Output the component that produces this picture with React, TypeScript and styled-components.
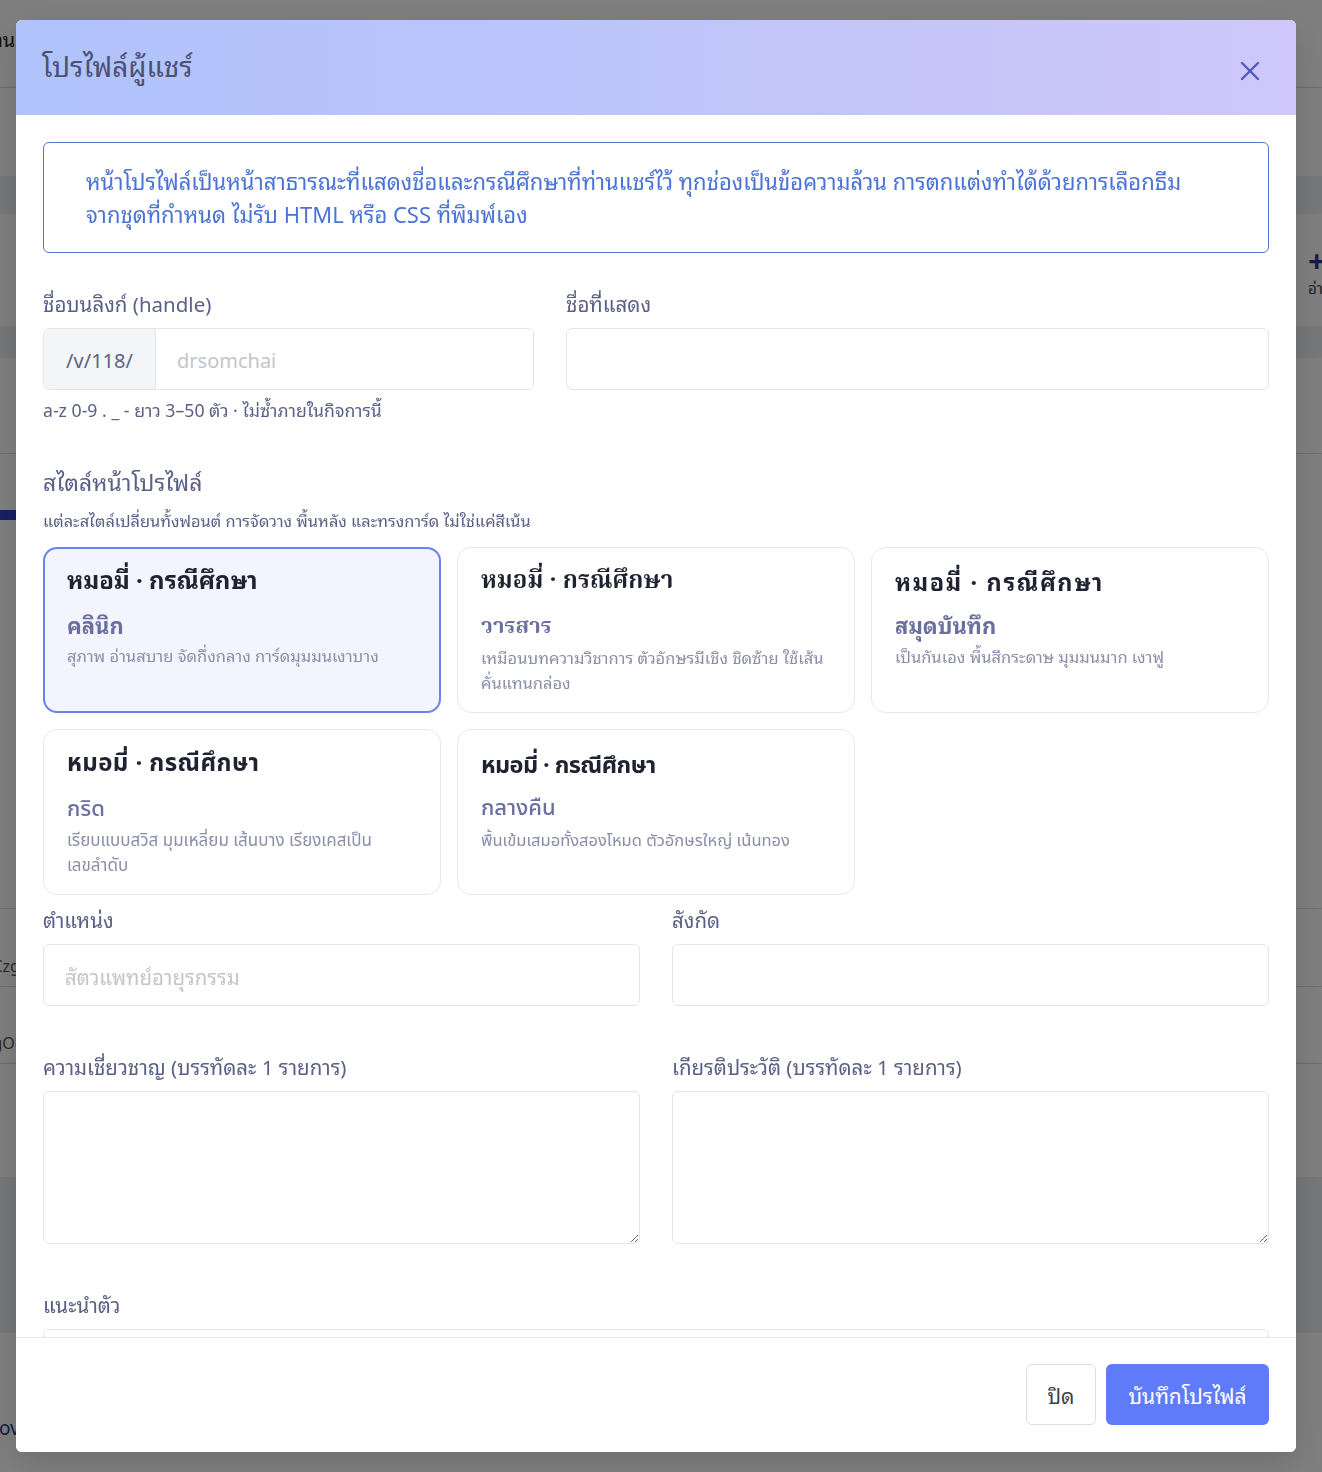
import { FunctionComponent } from 'react';
import styled, { createGlobalStyle } from 'styled-components';

const THAI = `"Noto Sans Thai Looped", "Noto Sans Thai", "Noto Sans", "DejaVu Sans", sans-serif`;

const GlobalStyle = createGlobalStyle`
  html, body {
    margin: 0;
    padding: 0;
    background: #ffffff;
    font-family: ${THAI};
  }
  * { box-sizing: border-box; }
`;

type StyleCard = {
  name: string;
  desc: string;
  variant: 'clinic' | 'journal' | 'notebook' | 'grid' | 'night';
};

const styleCards: StyleCard[] = [
  { name: 'คลินิก', desc: 'สุภาพ อ่านสบาย จัดกึ่งกลาง การ์ดมุมมนเงาบาง', variant: 'clinic' },
  { name: 'วารสาร', desc: 'เหมือนบทความวิชาการ ตัวอักษรมีเชิง ชิดซ้าย ใช้เส้นคั่นแทนกล่อง', variant: 'journal' },
  { name: 'สมุดบันทึก', desc: 'เป็นกันเอง พื้นสีกระดาษ มุมมนมาก เงาฟู', variant: 'notebook' },
  { name: 'กริด', desc: 'เรียบแบบสวิส มุมเหลี่ยม เส้นบาง เรียงเคสเป็นเลขลำดับ', variant: 'grid' },
  { name: 'กลางคืน', desc: 'พื้นเข้มเสมอทั้งสองโหมด ตัวอักษรใหญ่ เน้นทอง', variant: 'night' },
];

// offsets so each card's lines sit where the reference shows them
const cardSpacing: Record<StyleCard['variant'], { title: number; name: number; desc: number }> = {
  clinic: { title: 0, name: 16, desc: 3 },
  journal: { title: 4, name: 16, desc: 1 },
  notebook: { title: 3, name: 13, desc: 4 },
  grid: { title: 4, name: 16, desc: 4 },
  night: { title: 6, name: 13, desc: 4 },
};

const CloseIcon = () => (
  <svg width="20" height="20" viewBox="0 0 20 20" fill="none">
    <path d="M2 2 L18 18 M18 2 L2 18" stroke="#5457b8" strokeWidth="2.3" strokeLinecap="round" />
  </svg>
);

const PageBehind: FunctionComponent = () => (
  <Behind>
    <BehindTop>
      <BehindTitle>รายการงาน</BehindTitle>
    </BehindTop>
    <BehindGap h={88} />
    <BehindBand h={38} />
    <BehindRow h={112}>
      <BehindSide>
        <PlusMark>+</PlusMark>
        <SmallMark>อ่าน</SmallMark>
      </BehindSide>
    </BehindRow>
    <BehindBand h={32} />
    <BehindRow h={96} bordered />
    <BehindGap h={56} />
    <BehindProgress />
    <BehindRow h={389} bordered />
    <BehindRow h={78} bordered>
      <BehindCode>xCzg</BehindCode>
    </BehindRow>
    <BehindRow h={77} bordered>
      <BehindCode>xgOl</BehindCode>
    </BehindRow>
    <BehindGap h={113} />
    <BehindBand h={156} />
    <BehindRow h={139}>
      <BehindLink>Approve</BehindLink>
    </BehindRow>
  </Behind>
);

const App: FunctionComponent = () => (
  <>
    <GlobalStyle />
    <PageBehind />
    <Backdrop>
      <Modal>
        <Header>
          <Title>โปรไฟล์ผู้แชร์</Title>
          <CloseButton aria-label="close">
            <CloseIcon />
          </CloseButton>
        </Header>
        <Body>
          <Notice>
            หน้าโปรไฟล์เป็นหน้าสาธารณะที่แสดงชื่อและกรณีศึกษาที่ท่านแชร์ไว้ ทุกช่องเป็นข้อความล้วน การตกแต่งทำได้ด้วยการเลือกธีม
            <br />
            จากชุดที่กำหนด ไม่รับ HTML หรือ CSS ที่พิมพ์เอง
          </Notice>

          <FieldRow cols="491fr 703fr" top={35}>
            <Field>
              <Label>ชื่อบนลิงก์ (handle)</Label>
              <InputGroup>
                <Prefix>/v/118/</Prefix>
                <GroupInput placeholder="drsomchai" />
              </InputGroup>
              <Help>a-z 0-9 . _ - ยาว 3–50 ตัว · ไม่ซ้ำภายในกิจการนี้</Help>
            </Field>
            <Field>
              <Label>ชื่อที่แสดง</Label>
              <TextInput />
            </Field>
          </FieldRow>

          <SectionTitle>สไตล์หน้าโปรไฟล์</SectionTitle>
          <SectionHint>แต่ละสไตล์เปลี่ยนทั้งฟอนต์ การจัดวาง พื้นหลัง และทรงการ์ด ไม่ใช่แค่สีเน้น</SectionHint>

          <CardGrid>
            {styleCards.map((c, i) => (
              <Card key={c.variant} selected={i === 0}>
                <CardTitle variant={c.variant}>หมอมี่ · กรณีศึกษา</CardTitle>
                <CardName variant={c.variant}>{c.name}</CardName>
                <CardDesc variant={c.variant}>{c.desc}</CardDesc>
              </Card>
            ))}
          </CardGrid>

          <FieldRow cols="1fr 1fr" top={9}>
            <Field>
              <Label>ตำแหน่ง</Label>
              <TextInput placeholder="สัตวแพทย์อายุรกรรม" />
            </Field>
            <Field>
              <Label>สังกัด</Label>
              <TextInput />
            </Field>
          </FieldRow>

          <FieldRow cols="1fr 1fr" top={45}>
            <Field>
              <Label>ความเชี่ยวชาญ (บรรทัดละ 1 รายการ)</Label>
              <TextArea />
            </Field>
            <Field>
              <Label>เกียรติประวัติ (บรรทัดละ 1 รายการ)</Label>
              <TextArea />
            </Field>
          </FieldRow>

          <FieldRow cols="1fr" top={45}>
            <Field>
              <Label>แนะนำตัว</Label>
              <TextArea />
            </Field>
          </FieldRow>
        </Body>
        <Footer>
          <GhostButton>ปิด</GhostButton>
          <PrimaryButton>บันทึกโปรไฟล์</PrimaryButton>
        </Footer>
      </Modal>
    </Backdrop>
  </>
);

export default App;

/* ---------- page behind the dialog ---------- */

const Behind = styled.div`
  width: 1322px;
  height: 1472px;
  overflow: hidden;
  display: flex;
  flex-direction: column;
  font-family: ${THAI};
`;

const BehindTop = styled.div`
  height: 88px;
  flex: none;
  border-bottom: 1px solid #d7d9e0;
  display: flex;
  align-items: center;
`;

const BehindTitle = styled.div`
  margin-left: -76px;
  margin-top: -12px;
  font-size: 20px;
  color: #222;
  white-space: nowrap;
`;

const BehindGap = styled.div<{ h: number }>`
  height: ${(p) => p.h}px;
  flex: none;
`;

const BehindBand = styled.div<{ h: number }>`
  height: ${(p) => p.h}px;
  background: #eceef2;
  flex: none;
`;

const BehindRow = styled.div<{ h: number; bordered?: boolean }>`
  height: ${(p) => p.h}px;
  flex: none;
  border-bottom: ${(p) => (p.bordered ? '1px solid #d7d9e0' : 'none')};
  display: flex;
  align-items: flex-end;
  padding-bottom: 8px;
`;

const BehindSide = styled.div`
  margin-left: auto;
  margin-right: -20px;
  margin-bottom: 20px;
  display: flex;
  flex-direction: column;
  align-items: flex-start;
  gap: 4px;
  width: 34px;
`;

const PlusMark = styled.div`
  font-size: 30px;
  font-weight: 700;
  color: #2b3a8c;
  line-height: 26px;
`;

const SmallMark = styled.div`
  font-size: 15px;
  line-height: 22px;
  color: #444;
  white-space: nowrap;
`;

const BehindProgress = styled.div`
  height: 10px;
  width: 400px;
  background: #2f44c8;
  flex: none;
`;

const BehindCode = styled.div`
  margin-left: -16px;
  font-size: 16px;
  color: #555;
`;

const BehindLink = styled.div`
  margin-left: -44px;
  margin-bottom: 22px;
  font-size: 19px;
  color: #2b3a8c;
`;

/* ---------- dialog ---------- */

const Backdrop = styled.div`
  position: fixed;
  inset: 0;
  background: rgba(0, 0, 0, 0.5);
  padding: 20px 26px 20px 16px;
  display: flex;
  align-items: flex-start;
`;

const Modal = styled.div`
  width: 1280px;
  height: 1432px;
  background: #ffffff;
  border-radius: 6px;
  overflow: hidden;
  display: flex;
  flex-direction: column;
  box-shadow: 0 10px 30px rgba(0, 0, 0, 0.15);
`;

const Header = styled.div`
  height: 95px;
  flex: none;
  display: flex;
  align-items: center;
  justify-content: space-between;
  padding: 0 36px 0 26px;
  background: linear-gradient(90deg, #b0c3fb 0%, #bcc4fa 45%, #cfc7f9 100%);
`;

const Title = styled.h1`
  margin: -6px 0 0;
  font-size: 28px;
  font-weight: 400;
  color: #4b5075;
`;

const CloseButton = styled.button`
  border: none;
  background: none;
  padding: 0;
  margin-top: 6px;
  display: flex;
  cursor: pointer;
`;

const Body = styled.div`
  flex: 1;
  overflow: hidden;
  padding: 27px 27px 0;
`;

const Notice = styled.div`
  border: 1px solid #5677c9;
  border-radius: 6px;
  padding: 21px 42px;
  color: #4a73d4;
  font-size: 22px;
  line-height: 33px;
  height: 111px;
  white-space: nowrap;
`;

const FieldRow = styled.div<{ cols: string; top: number }>`
  display: grid;
  grid-template-columns: ${(p) => p.cols};
  column-gap: 32px;
  margin-top: ${(p) => p.top}px;
`;

const Field = styled.div`
  display: flex;
  flex-direction: column;
  min-width: 0;
`;

const Label = styled.label`
  font-size: 20.5px;
  line-height: 30px;
  color: #5b6186;
  margin-bottom: 10px;
`;

const InputGroup = styled.div`
  display: flex;
  height: 62px;
  border: 1px solid #e3e5eb;
  border-radius: 6px;
  overflow: hidden;
`;

const Prefix = styled.div`
  width: 112px;
  flex: none;
  background: #f4f5f7;
  border-right: 1px solid #e3e5eb;
  display: flex;
  align-items: center;
  justify-content: center;
  font-size: 20px;
  color: #5b6186;
`;

const GroupInput = styled.input`
  flex: 1;
  min-width: 0;
  border: none;
  outline: none;
  padding: 0 21px;
  font-family: ${THAI};
  font-size: 20px;
  color: #333;
  &::placeholder { color: #c3c5cc; }
`;

const TextInput = styled.input`
  height: 62px;
  border: 1px solid #e3e5eb;
  border-radius: 6px;
  padding: 0 21px;
  font-family: ${THAI};
  font-size: 20.5px;
  color: #333;
  outline: none;
  &::placeholder { color: #c3c5cc; }
`;

const TextArea = styled.textarea`
  height: 153px;
  border: 1px solid #e3e5eb;
  border-radius: 6px;
  padding: 12px 21px;
  font-family: ${THAI};
  font-size: 20px;
  outline: none;
  resize: vertical;
`;

const Help = styled.div`
  margin-top: 7px;
  font-size: 17.7px;
  line-height: 24px;
  color: #5b6186;
`;

const SectionTitle = styled.div`
  margin-top: 44px;
  font-size: 23px;
  line-height: 32px;
  color: #5b6186;
`;

const SectionHint = styled.div`
  margin-top: 11px;
  font-size: 16.4px;
  line-height: 24px;
  color: #5b6186;
`;

const CardGrid = styled.div`
  margin-top: 15px;
  display: grid;
  grid-template-columns: repeat(3, 1fr);
  grid-auto-rows: 166px;
  gap: 16px;
`;

type V = { variant: StyleCard['variant'] };

const cardFont = (v: StyleCard['variant']) => {
  switch (v) {
    case 'journal':
      return `"Noto Serif Thai", "Noto Sans Thai Looped", serif`;
    case 'grid':
    case 'night':
      return `"Noto Sans Thai", "Noto Sans Thai Looped", sans-serif`;
    default:
      return THAI;
  }
};

const Card = styled.div<{ selected?: boolean }>`
  border: ${(p) => (p.selected ? '2px solid #6b83ea' : '1px solid #e7e8ee')};
  background: ${(p) => (p.selected ? '#f3f4fe' : '#ffffff')};
  border-radius: 14px;
  padding: ${(p) => (p.selected ? '14px 22px' : '15px 23px')};
  display: flex;
  flex-direction: column;
`;

const CardTitle = styled.div<V>`
  font-family: ${(p) => cardFont(p.variant)};
  font-size: ${(p) => (p.variant === 'notebook' || p.variant === 'night' ? '23.5px' : '24px')};
  line-height: 30px;
  font-weight: 700;
  color: #1f2230;
  letter-spacing: ${(p) =>
    p.variant === 'notebook' ? '1.6px' : p.variant === 'night' ? '-0.6px' : p.variant === 'grid' ? '0.4px' : '0'};
  margin-top: ${(p) => cardSpacing[p.variant].title}px;
`;

const CardName = styled.div<V>`
  font-family: ${(p) => cardFont(p.variant)};
  margin-top: ${(p) => cardSpacing[p.variant].name}px;
  font-size: 22px;
  line-height: 30px;
  font-weight: ${(p) => (p.variant === 'grid' || p.variant === 'night' ? 500 : 700)};
  color: #6a6f9f;
`;

const CardDesc = styled.div<V>`
  font-family: ${(p) => cardFont(p.variant === 'journal' ? 'clinic' : p.variant)};
  margin-top: ${(p) => cardSpacing[p.variant].desc}px;
  font-size: ${(p) => (p.variant === 'grid' ? '17px' : '16.5px')};
  line-height: 25px;
  color: #8a8ea7;
`;

const Footer = styled.div`
  height: 115px;
  flex: none;
  border-top: 1px solid #e6e8ee;
  display: flex;
  align-items: center;
  justify-content: flex-end;
  gap: 10px;
  padding: 0 27px 1px;
  background: #ffffff;
`;

const GhostButton = styled.button`
  height: 61px;
  width: 70px;
  border: 1px solid #dcdee5;
  border-radius: 6px;
  background: #ffffff;
  font-family: ${THAI};
  font-size: 21px;
  color: #3d3f4c;
  cursor: pointer;
`;

const PrimaryButton = styled.button`
  height: 61px;
  width: 163px;
  border: none;
  border-radius: 6px;
  background: #5f7bf9;
  font-family: ${THAI};
  font-size: 21px;
  color: #ffffff;
  cursor: pointer;
`;
